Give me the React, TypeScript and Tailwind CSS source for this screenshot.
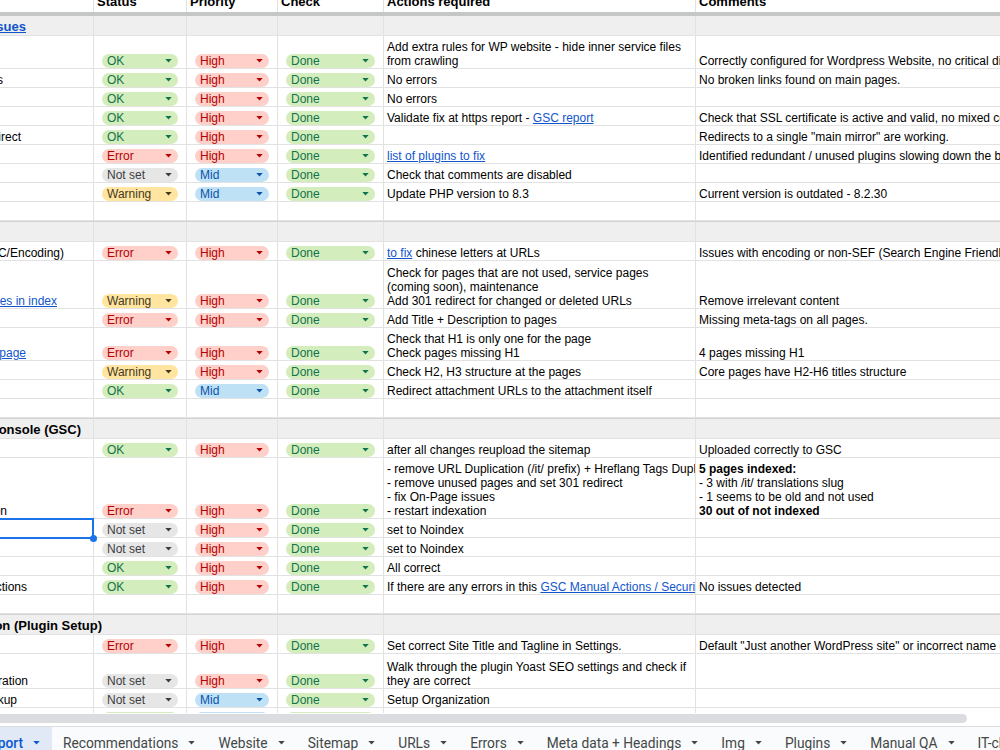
import type { ReactNode } from 'react'

type ChipValue = 'OK' | 'Done' | 'High' | 'Error' | 'Not set' | 'Mid' | 'Warning'

type Row = {
  kind: 'section' | 'item' | 'empty'
  h: string
  top?: boolean
  first?: ReactNode
  firstPad?: string
  status?: ChipValue
  priority?: ChipValue
  check?: ChipValue
  actions?: ReactNode[]
  comments?: ReactNode[]
  selected?: boolean
}

const chipStyles: Record<ChipValue, string> = {
  OK: 'bg-[#d4edbc] text-[#11734b]',
  Done: 'bg-[#d4edbc] text-[#11734b]',
  High: 'bg-[#ffcfc9] text-[#b10202]',
  Error: 'bg-[#ffcfc9] text-[#b10202]',
  'Not set': 'bg-[#e6e6e6] text-[#3d3d3d]',
  Mid: 'bg-[#bfe1f6] text-[#0a53a8]',
  Warning: 'bg-[#ffe5a0] text-[#473821]',
}

const Link = ({ children }: { children: ReactNode }) => (
  <span className="text-[#1155cc] underline">{children}</span>
)

const rows: Row[] = [
  {
    kind: 'section',
    h: 'h-[20px]',
    first: <span className="text-[#1155cc] underline">Technical Issues</span>,
    firstPad: 'pr-[67px]',
  },
  {
    kind: 'item',
    h: 'h-[33px]',
    status: 'OK',
    priority: 'High',
    check: 'Done',
    actions: ['Add extra rules for WP website - hide inner service files', 'from crawling'],
    comments: ['Correctly configured for Wordpress Website, no critical directives found.'],
  },
  {
    kind: 'item',
    h: 'h-[19px]',
    first: 'Broken links',
    firstPad: 'pr-[90px]',
    status: 'OK',
    priority: 'High',
    check: 'Done',
    actions: ['No errors'],
    comments: ['No broken links found on main pages.'],
  },
  { kind: 'item', h: 'h-[19px]', status: 'OK', priority: 'High', check: 'Done', actions: ['No errors'] },
  {
    kind: 'item',
    h: 'h-[19px]',
    status: 'OK',
    priority: 'High',
    check: 'Done',
    actions: [
      <>
        Validate fix at https report - <Link>GSC report</Link>
      </>,
    ],
    comments: ['Check that SSL certificate is active and valid, no mixed content issues.'],
  },
  {
    kind: 'item',
    h: 'h-[19px]',
    first: 'Main mirror redirect',
    firstPad: 'pr-[72px]',
    status: 'OK',
    priority: 'High',
    check: 'Done',
    comments: ['Redirects to a single "main mirror" are working.'],
  },
  {
    kind: 'item',
    h: 'h-[19px]',
    status: 'Error',
    priority: 'High',
    check: 'Done',
    actions: [<Link>list of plugins to fix</Link>],
    comments: ['Identified redundant / unused plugins slowing down the backend.'],
  },
  {
    kind: 'item',
    h: 'h-[19px]',
    status: 'Not set',
    priority: 'Mid',
    check: 'Done',
    actions: ['Check that comments are disabled'],
  },
  {
    kind: 'item',
    h: 'h-[19px]',
    status: 'Warning',
    priority: 'Mid',
    check: 'Done',
    actions: ['Update PHP version to 8.3'],
    comments: ['Current version is outdated - 8.2.30'],
  },
  { kind: 'empty', h: 'h-[19px]' },
  { kind: 'section', h: 'h-[21px]', top: true },
  {
    kind: 'item',
    h: 'h-[19px]',
    first: 'URL structure (CNC/Encoding)',
    firstPad: 'pr-[29px]',
    status: 'Error',
    priority: 'High',
    check: 'Done',
    actions: [
      <>
        <Link>to fix</Link> chinese letters at URLs
      </>,
    ],
    comments: ['Issues with encoding or non-SEF (Search Engine Friendly) URLs'],
  },
  {
    kind: 'item',
    h: 'h-[48px]',
    first: <Link>Junk pages in index</Link>,
    firstPad: 'pr-[36px]',
    status: 'Warning',
    priority: 'High',
    check: 'Done',
    actions: [
      'Check for pages that are not used, service pages',
      '(coming soon), maintenance',
      'Add 301 redirect for changed or deleted URLs',
    ],
    comments: ['Remove irrelevant content'],
  },
  {
    kind: 'item',
    h: 'h-[19px]',
    status: 'Error',
    priority: 'High',
    check: 'Done',
    actions: ['Add Title + Description to pages'],
    comments: ['Missing meta-tags on all pages.'],
  },
  {
    kind: 'item',
    h: 'h-[33px]',
    first: <Link>One H1 on the page</Link>,
    firstPad: 'pr-[67px]',
    status: 'Error',
    priority: 'High',
    check: 'Done',
    actions: ['Check that H1 is only one for the page', 'Check pages missing H1'],
    comments: ['4 pages missing H1'],
  },
  {
    kind: 'item',
    h: 'h-[19px]',
    status: 'Warning',
    priority: 'High',
    check: 'Done',
    actions: ['Check H2, H3 structure at the pages'],
    comments: ['Core pages have H2-H6 titles structure'],
  },
  {
    kind: 'item',
    h: 'h-[19px]',
    status: 'OK',
    priority: 'Mid',
    check: 'Done',
    actions: ['Redirect attachment URLs to the attachment itself'],
  },
  { kind: 'empty', h: 'h-[19px]' },
  {
    kind: 'section',
    h: 'h-[21px]',
    top: true,
    first: 'Google Search Console (GSC)',
    firstPad: 'pr-[12px]',
  },
  {
    kind: 'item',
    h: 'h-[19px]',
    status: 'OK',
    priority: 'High',
    check: 'Done',
    actions: ['after all changes reupload the sitemap'],
    comments: ['Uploaded correctly to GSC'],
  },
  {
    kind: 'item',
    h: 'h-[61px]',
    first: 'Indexation',
    firstPad: 'pr-[86px]',
    status: 'Error',
    priority: 'High',
    check: 'Done',
    actions: [
      '- remove URL Duplication (/it/ prefix) + Hreflang Tags Duplication',
      '- remove unused pages and set 301 redirect',
      '- fix On-Page issues',
      '- restart indexation',
    ],
    comments: [
      <b>5 pages indexed:</b>,
      '- 3 with /it/ translations slug',
      '- 1 seems to be old and not used',
      <b>30 out of not indexed</b>,
    ],
  },
  {
    kind: 'item',
    h: 'h-[19px]',
    selected: true,
    status: 'Not set',
    priority: 'High',
    check: 'Done',
    actions: ['set to Noindex'],
  },
  {
    kind: 'item',
    h: 'h-[19px]',
    status: 'Not set',
    priority: 'High',
    check: 'Done',
    actions: ['set to Noindex'],
  },
  { kind: 'item', h: 'h-[19px]', status: 'OK', priority: 'High', check: 'Done', actions: ['All correct'] },
  {
    kind: 'item',
    h: 'h-[19px]',
    first: 'Manual Actions',
    firstPad: 'pr-[66px]',
    status: 'OK',
    priority: 'High',
    check: 'Done',
    actions: [
      <>
        If there are any errors in this <Link>GSC Manual Actions / Security Issues</Link>
      </>,
    ],
    comments: ['No issues detected'],
  },
  { kind: 'empty', h: 'h-[19px]' },
  {
    kind: 'section',
    h: 'h-[21px]',
    top: true,
    first: <span className="-mr-[9px]">WordPress Configuration (Plugin Setup)</span>,
    firstPad: 'pr-0',
  },
  {
    kind: 'item',
    h: 'h-[19px]',
    status: 'Error',
    priority: 'High',
    check: 'Done',
    actions: ['Set correct Site Title and Tagline in Settings.'],
    comments: ['Default "Just another WordPress site" or incorrect name changed.'],
  },
  {
    kind: 'item',
    h: 'h-[35px]',
    first: 'Yoast SEO configuration',
    firstPad: 'pr-[65px]',
    status: 'Not set',
    priority: 'High',
    check: 'Done',
    actions: ['Walk through the plugin Yoast SEO settings and check if', 'they are correct'],
  },
  {
    kind: 'item',
    h: 'h-[19px]',
    first: 'Backup',
    firstPad: 'pr-[76px]',
    status: 'Not set',
    priority: 'Mid',
    check: 'Done',
    actions: ['Setup Organization'],
  },
  { kind: 'item', h: 'h-[19px]', status: 'OK', priority: 'Mid', check: 'Done' },
]

const tabs = [
  'Recommendations',
  'Website',
  'Sitemap',
  'URLs',
  'Errors',
  'Meta data + Headings',
  'Img',
  'Plugins',
  'Manual QA',
  'IT-check',
]

function Caret() {
  return (
    <svg width="7" height="4" viewBox="0 0 7 4" className="shrink-0 fill-current">
      <path d="M0.3 0h6.4L3.5 3.6z" />
    </svg>
  )
}

function Chip({ value }: { value: ChipValue }) {
  return (
    <div
      className={`flex h-[14px] w-full items-center justify-between rounded-full pl-[5px] pr-[6px] text-[12px] leading-none ${chipStyles[value]}`}
    >
      <span>{value}</span>
      <Caret />
    </div>
  )
}

function ChipCell({ width, value }: { width: string; value?: ChipValue }) {
  return (
    <div className={`flex ${width} shrink-0 items-end border-r border-[#e2e2e2] px-[8px]`}>
      {value && <Chip value={value} />}
    </div>
  )
}

function SheetRow({ row }: { row: Row }) {
  const section = row.kind === 'section'
  return (
    <div
      className={`flex ${row.h} border-b border-[#e2e2e2] ${section ? 'bg-[#efefef]' : 'bg-white'} ${
        row.top ? 'border-t border-t-[#d3d3d3]' : ''
      }`}
    >
      <div
        className={`relative flex w-[94px] shrink-0 items-end justify-end border-r border-[#e2e2e2] ${
          row.firstPad ?? ''
        } ${section ? 'pb-[1px] text-[13px] font-bold' : ''}`}
      >
        {row.first && <span className="shrink-0 whitespace-nowrap leading-[14px]">{row.first}</span>}
        {row.selected && (
          <div className="absolute -top-[1px] -bottom-[2px] -left-[3px] -right-[1px] z-10 border-2 border-[#1a73e8]">
            <div className="absolute -right-[5px] -bottom-[5px] h-[7px] w-[7px] rounded-full bg-[#1a73e8]" />
          </div>
        )}
      </div>
      <ChipCell width="w-[93px]" value={row.status} />
      <ChipCell width="w-[91px]" value={row.priority} />
      <ChipCell width="w-[106px]" value={row.check} />
      <div className="flex w-[312px] shrink-0 flex-col justify-end overflow-hidden border-r border-[#e2e2e2] px-[3px]">
        {row.actions?.map((line, i) => (
          <div key={i} className="whitespace-nowrap leading-[14px]">
            {line}
          </div>
        ))}
      </div>
      <div className="flex flex-1 flex-col justify-end px-[3px]">
        {row.comments?.map((line, i) => (
          <div key={i} className="whitespace-nowrap leading-[14px]">
            {line}
          </div>
        ))}
      </div>
    </div>
  )
}

export default function App() {
  return (
    <div className="flex h-[750px] w-[1000px] flex-col overflow-hidden bg-white font-['Liberation_Sans',Arial,sans-serif] text-[12px] text-black">
      <div className="h-[713px] shrink-0 overflow-hidden">
        {/* Header row, scrolled so only its lower part shows */}
        <div className="flex h-[12px] overflow-hidden text-[13px] font-bold">
          <div className="w-[94px] shrink-0 border-r border-[#e2e2e2]" />
          {[
            ['Status', 'w-[93px]'],
            ['Priority', 'w-[91px]'],
            ['Check', 'w-[106px]'],
            ['Actions required', 'w-[312px]'],
          ].map(([label, w]) => (
            <div key={label} className={`flex ${w} shrink-0 items-end border-r border-[#e2e2e2] px-[3px] pb-[3px]`}>
              <span className="whitespace-nowrap leading-[14px]">{label}</span>
            </div>
          ))}
          <div className="flex flex-1 items-end px-[3px] pb-[3px]">
            <span className="whitespace-nowrap leading-[14px]">Comments</span>
          </div>
        </div>
        <div className="h-[4px] bg-[#c4c7c5]" />

        {rows.map((row, i) => (
          <SheetRow key={i} row={row} />
        ))}
      </div>

      {/* Horizontal scrollbar */}
      <div className="h-[14px] shrink-0 border-b border-[#dadce0] bg-white pt-[1px]">
        <div className="-ml-[10px] h-[9px] w-[977px] rounded-full bg-[#dadce0]" />
      </div>

      {/* Sheet tabs */}
      <div className="flex h-[32px] shrink-0 bg-[#f9fbfd] font-['Roboto',sans-serif] text-[13.75px] text-[#444746]">
        <div className="-ml-[28px] flex w-[80px] shrink-0 items-center justify-end gap-[10px] bg-[#e1e9f7] pr-[12px] font-medium text-[#0b57d0]">
          <span className="whitespace-nowrap">Report</span>
          <Caret />
        </div>
        {tabs.map((tab) => (
          <div key={tab} className="flex shrink-0 items-center gap-[10px] pl-[11px] pr-[12px]">
            <span className="whitespace-nowrap">{tab}</span>
            <Caret />
          </div>
        ))}
      </div>
    </div>
  )
}
